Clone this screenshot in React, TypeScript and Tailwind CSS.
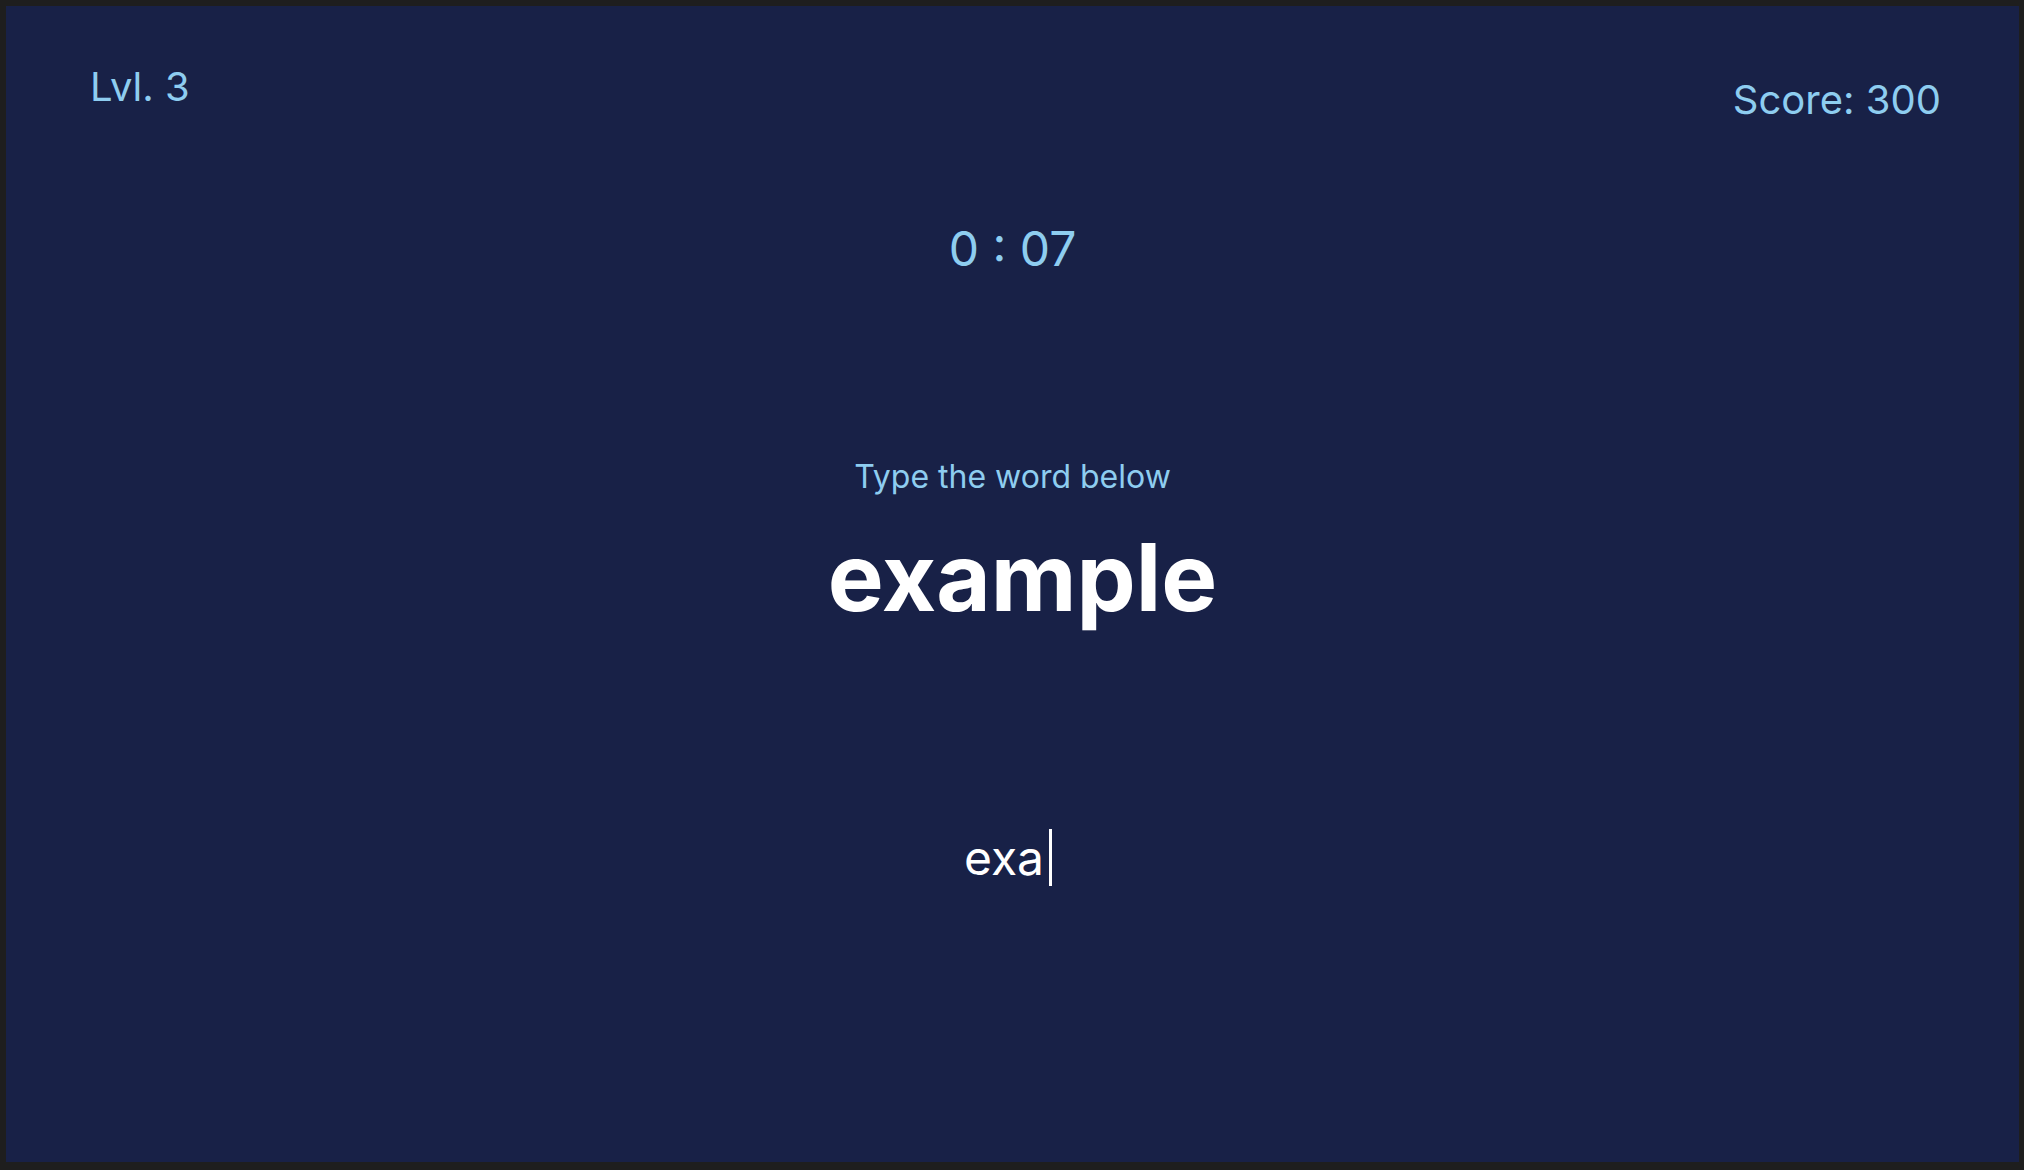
function App() {
	return (
		<div className="w-[2024px] h-[1170px] bg-[#1e1e1e] pl-[6px] pt-[6px] pr-[5px] pb-[8px] font-['Inter',sans-serif]">
			<div className="h-full bg-[#182147] flex flex-col">
				<div className="flex items-start justify-between pt-[61px] pl-[84px] pr-[78px]">
					<div className="text-[40px] leading-none text-[#8ecdf0]">Lvl. 3</div>
					<div className="mt-[13px] text-[40px] leading-none text-[#8ecdf0]">Score: 300</div>
				</div>
				<div className="flex flex-col items-center">
					<div className="mt-[105px] text-[48px] leading-none text-[#8ecdf0]">0 : 07</div>
					<div className="mt-[188px] text-[32px] leading-none text-[#8ecdf0]">Type the word below</div>
					<div className="mt-[37px] text-[94px] leading-none font-bold text-white pl-[20px]">example</div>
					<div className="mt-[205px] flex items-center gap-[5px] pr-[9px]">
						<span className="text-[48px] leading-none text-white">exa</span>
						<span className="w-[3px] h-[57px] bg-white"></span>
					</div>
				</div>
			</div>
		</div>
	)
}
export default App
